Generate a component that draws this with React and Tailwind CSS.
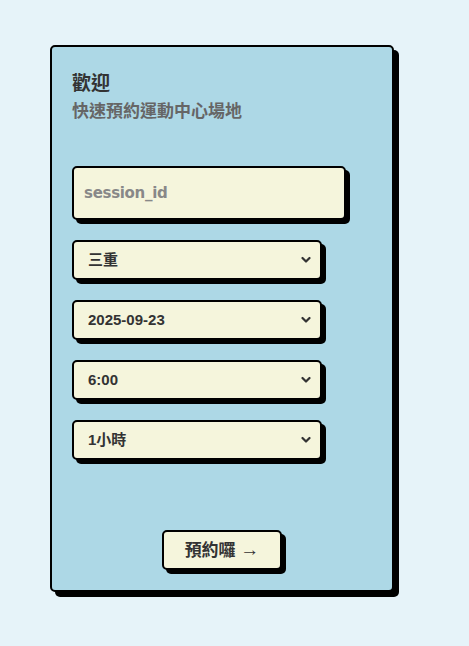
import React from "react";

function Chevron() {
    return (
        <svg
            className="pointer-events-none absolute right-[11px] top-1/2 -translate-y-1/2"
            width="10"
            height="7"
            viewBox="0 0 10 7"
        >
            <path d="M1.5 1.5 L5 5 L8.5 1.5" fill="none" stroke="#333" strokeWidth="2.2" strokeLinecap="round" strokeLinejoin="round" />
        </svg>
    );
}

function Select({ options }) {
    return (
        <div className="relative w-[250px] h-[40px]">
            <select className="appearance-none w-full h-full rounded-[5px] border-2 border-black bg-[#f5f5dc] shadow-[4px_4px_0_#000] pl-[14px] pr-8 text-[15px] font-bold text-[#333] outline-none font-['Liberation_Sans','Noto_Sans_CJK_TC',sans-serif]">
                {options.map((o) => (
                    <option key={o}>{o}</option>
                ))}
            </select>
            <Chevron />
        </div>
    );
}

export default function App() {
    return (
        <div className="min-h-screen bg-[#e6f3f9] pt-[45px] pl-[50px] font-['Liberation_Sans','Noto_Sans_CJK_TC',sans-serif]">
            <div className="w-[344px] h-[547px] rounded-[5px] border-2 border-black bg-[#add8e6] shadow-[5px_5px_0_#000] px-5 pt-[23px] pb-5 flex flex-col">
                <h1 className="text-[19px] leading-[27px] font-bold text-[#333]">歡迎</h1>
                <p className="mt-[3px] text-[17px] leading-[24px] font-bold text-[#666]">快速預約運動中心場地</p>

                <div className="mt-[42px] flex flex-col gap-5">
                    <input
                        placeholder="session_id"
                        className="w-[274px] h-[54px] rounded-[5px] border-2 border-black bg-[#f5f5dc] shadow-[4px_4px_0_#000] px-[10px] text-[15px] font-bold text-[#333] placeholder:text-[#888] outline-none font-['DejaVu_Sans',sans-serif] tracking-[-0.3px]"
                    />
                    <Select options={["三重"]} />
                    <Select options={["2025-09-23"]} />
                    <Select options={["6:00"]} />
                    <Select options={["1小時"]} />
                </div>

                <div className="mt-auto flex justify-center">
                    <button className="w-[120px] h-[40px] rounded-[5px] border-2 border-black bg-[#f5f5dc] shadow-[4px_4px_0_#000] text-[17px] font-bold text-[#333]">
                        預約囉 <span className="font-['Liberation_Sans',sans-serif] font-normal text-[19px]">→</span>
                    </button>
                </div>
            </div>
        </div>
    );
}
